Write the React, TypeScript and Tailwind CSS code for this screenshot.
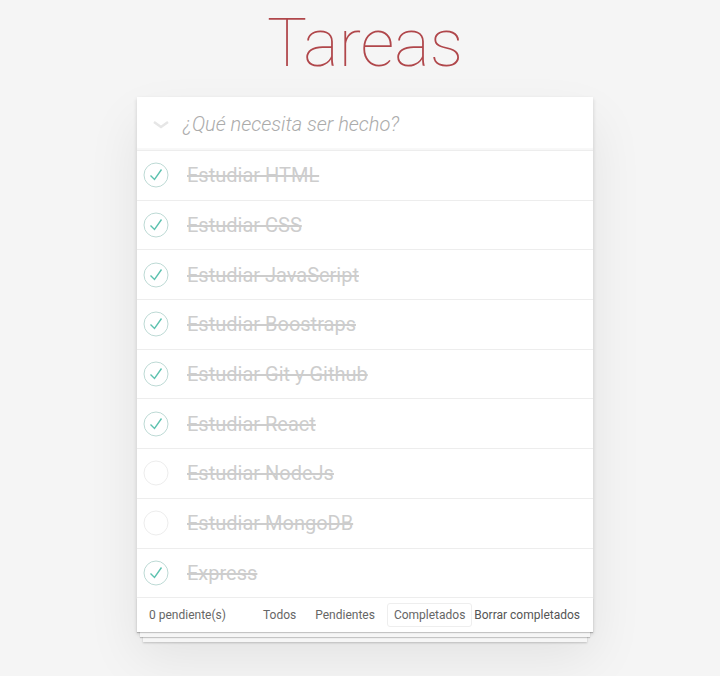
import { useState } from "react";

const initialTodos = [
    { id: 1, title: "Estudiar HTML", done: true },
    { id: 2, title: "Estudiar CSS", done: true },
    { id: 3, title: "Estudiar JavaScript", done: true },
    { id: 4, title: "Estudiar Boostraps", done: true },
    { id: 5, title: "Estudiar Git y Github", done: true },
    { id: 6, title: "Estudiar React", done: true },
    { id: 7, title: "Estudiar NodeJs", done: false },
    { id: 8, title: "Estudiar MongoDB", done: false },
    { id: 9, title: "Express", done: true },
];

const Check = ({ done }: { done: boolean }) => {
    return (
        <svg width="26" height="26" viewBox="0 0 26 26" className="shrink-0">
            <circle cx="13" cy="13" r="12" fill="none" stroke={done ? "#bddad5" : "#ededed"} strokeWidth="1" />
            {done && <path d="M7.5 13.5 L11.5 17.5 L18.5 7.5" fill="none" stroke="#5dc2af" strokeWidth="1.4" />}
        </svg>
    );
};

const App = () => {

    const [todos] = useState(initialTodos);

    return (
        <div className="min-h-[676px] bg-[#f5f5f5] font-['Roboto',sans-serif] flex flex-col items-center pl-[10px]">
            <h1 className="text-[67px] leading-none font-thin text-[#b0474b] mt-[10px] mb-[20px]">Tareas</h1>

            <div className="w-[456px] bg-white shadow-[0_2px_4px_rgba(0,0,0,0.15),0_25px_50px_rgba(0,0,0,0.08)]">
                {/* nueva tarea */}
                <div className="h-[54px] flex items-center border-b border-[#ededed] shadow-[inset_0_-2px_1px_rgba(0,0,0,0.03)]">
                    <div className="w-[46px] flex justify-center pl-[2px] pt-[2px]">
                        <svg width="18" height="10" viewBox="0 0 18 10">
                            <path d="M2 2 L9 7 L16 2" fill="none" stroke="#e6e6e6" strokeWidth="2.5" />
                        </svg>
                    </div>
                    <span className="text-[20px] italic font-light text-[#ababab]">¿Qué necesita ser hecho?</span>
                </div>

                {todos.map((row) => (
                    <div key={row.id} className="h-[49.7px] flex items-center border-b border-[#ededed] pl-[6px]">
                        <Check done={row.done} />
                        <span className="ml-[18px] text-[20px] text-[#cdcdcd] line-through">{row.title}</span>
                    </div>
                ))}

                <div className="h-[34px] flex items-center pl-[12px] pr-[13px] text-[12px] text-[#666] whitespace-nowrap shadow-[0_1px_1px_rgba(0,0,0,0.2),0_8px_0_-3px_#f6f6f6,0_9px_1px_-3px_rgba(0,0,0,0.2),0_16px_0_-6px_#f6f6f6,0_17px_2px_-6px_rgba(0,0,0,0.2)]">
                    <span className="w-[106px]">0 pendiente(s)</span>
                    <span className="px-[7px] py-[2px] border border-transparent rounded-[3px]">Todos</span>
                    <span className="ml-[3px] px-[7px] py-[2px] border border-transparent rounded-[3px]">Pendientes</span>
                    <span className="ml-[4px] px-[6px] py-[2px] border border-[#eeeeee] rounded-[3px]">Completados</span>
                    <span className="ml-auto text-[#555]">Borrar completados</span>
                </div>
            </div>
        </div>
    );
};

export default App;
